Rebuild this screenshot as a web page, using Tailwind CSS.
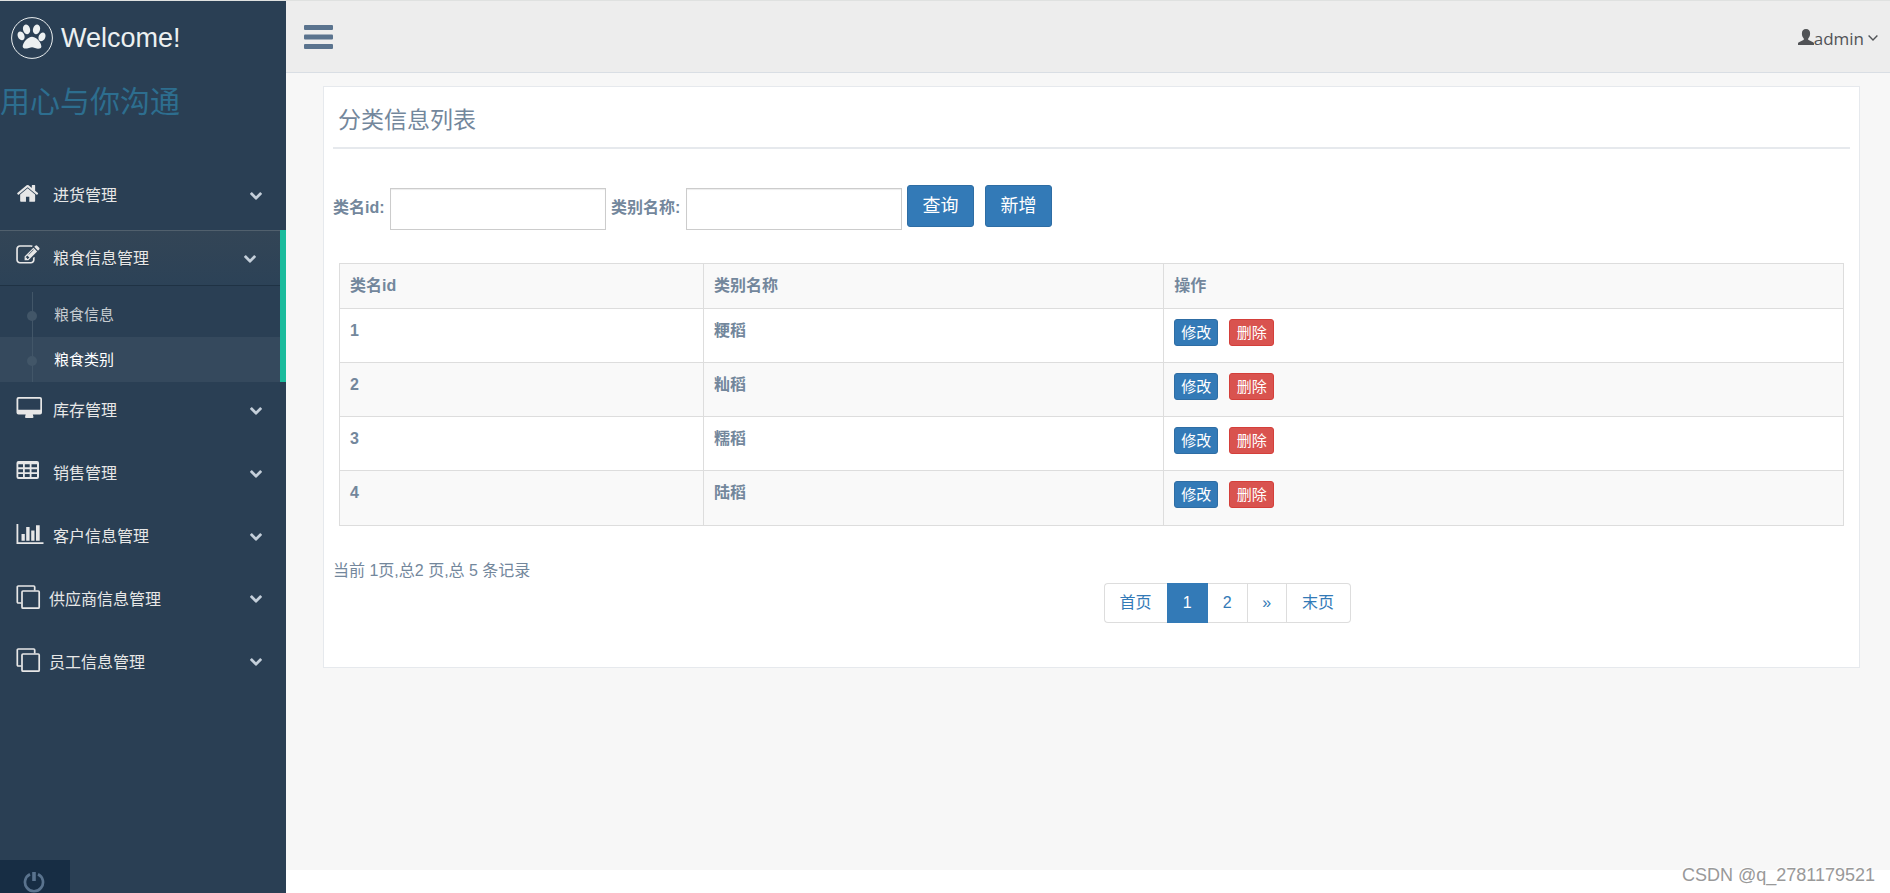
<!DOCTYPE html>
<html lang="zh-CN">
<head>
<meta charset="utf-8">
<meta name="viewport" content="width=device-width, initial-scale=1">
<title>分类信息列表</title>
<script src="https://cdn.jsdelivr.net/npm/@tailwindcss/browser@4"></script>
</head>
<body class="relative flex min-h-screen border-t border-[#dfe1e0] bg-white font-['Liberation_Sans','Noto_Sans_CJK_SC',sans-serif] text-base leading-6 text-[#73879c]">
<svg class="hidden" aria-hidden="true">
  <symbol id="chev" viewBox="90 520 1612 1060"><path d="M1683 808l-742 741q-19 19-45 19t-45-19l-742-741q-19-19-19-45.500t19-45.500l166-165q19-19 45-19t45 19l531 531 531-531q19-19 45-19t45 19l166 165q19 19 19 45.500t-19 45.500z"/></symbol>
  <symbol id="clone" viewBox="0 -1 28 28"><g fill="none" stroke="currentColor" stroke-width="1.700"><rect x="6" y="5" width="17.200" height="17.200" rx="1"/><path d="M5.500 17H2.300a1 1 0 0 1-1-1V1a1 1 0 0 1 1-1h15.400a1 1 0 0 1 1 1v3.500"/></g></symbol>
</svg>

<aside class="flex w-[286px] shrink-0 flex-col bg-[#2a3f54] text-[#e7e7e7]">
  <a href="#" class="flex h-[61px] items-center gap-2 pt-[13px] pl-[11px] text-[27px] text-[#ecf0f1]">
    <svg class="size-[42px]" viewBox="0 0 42 42" fill="currentColor" aria-hidden="true"><circle cx="21" cy="21" r="20.400" fill="none" stroke="currentColor" stroke-width="1"/><g transform="translate(7.500 5.200) scale(.0162)"><path transform="translate(-60 0)" d="M780 493.500q0 60-19 113.500t-63 92.500-105 39q-76 0-138-57.500t-92-135.500-30-151q0-60 19-113.500t63-92.500 105-39q77 0 138.500 57.500t91.500 135 30 151.500zm-342 421q0 80-42 139t-119 59q-76 0-141.500-55.500t-100.500-133.500-35-152q0-80 42-139.500t119-59.500q76 0 141.500 55.500t100.500 134 35 152.500zm458-19q118 0 255 97.500t229 237 92 254.500q0 46-17 76.500t-48.500 45-64.500 20-76 5.500q-68 0-187.500-45t-182.500-45q-66 0-192.500 44.500t-200.500 44.500q-183 0-183-146 0-86 56-191.500t139.500-192.500 187.500-146 193-59zm239-157q-61 0-105-39t-63-92.500-19-113.500q0-74 30-151.500t91.500-135 138.500-57.500q61 0 105 39t63 92.500 19 113.500q0 73-30 151t-92 135.500-138 57.500zm432-104q77 0 119 59.500t42 139.500q0 74-35 152t-100.500 133.500-141.500 55.500q-77 0-119-59t-42-139q0-74 35-152.500t100.500-134 141.500-55.500z"/></g></svg>
    <span>Welcome!</span>
  </a>
  <h2 class="mt-5 text-[30px] leading-10 text-[#2d6e8f]">用心与你沟通</h2>

  <nav class="mt-[45px]">
    <ul>
      <li class="mb-[7px]"><a href="#" class="flex h-14 items-center pt-[2px] pr-6 pl-4">
        <svg class="mr-[9px] size-7" viewBox="0 0 28 28" fill="currentColor" aria-hidden="true"><path transform="translate(0 -.3) scale(.013)" d="M1472 992v480q0 26-19 45t-45 19h-384v-384h-256v384h-384q-26 0-45-19t-19-45v-480q0-1 .5-3t.5-3l575-474 575 474q1 2 1 6zm223-69l-62 74q-8 9-21 11h-3q-13 0-21-7l-692-577-692 577q-12 8-24 7-13-2-21-11l-62-74q-8-10-7-23.500t11-21.500l719-599q32-26 76-26t76 26l244 204v-195q0-14 9-23t23-9h192q14 0 23 9t9 23v408l219 182q10 8 11 21.500t-7 23.500z"/></svg>
        <span class="grow">进货管理</span><svg class="h-2 w-3 text-[#c4cfda]" fill="currentColor"><use href="#chev"/></svg></a></li>

      <li class="border-r-[6px] border-[#1abb9c]">
        <a href="#" class="flex h-14 items-center border-t border-b border-t-[#51606d] border-b-[#1f3244] bg-linear-to-b from-[#334556] to-[#2c4257] pt-[2px] pr-6 pl-4">
          <svg class="mr-[9px] size-7" viewBox="0 0 28 28" fill="currentColor" aria-hidden="true"><path transform="translate(.2 -1.500) scale(.0131)" d="M888 1184l116-116-152-152-116 116v56h96v96h56zm440-720q-16-16-33 1l-350 350q-17 17-1 33t33-1l350-350q17-17 1-33zm80 594v190q0 119-84.500 203.500t-203.500 84.500h-832q-119 0-203.500-84.500t-84.500-203.500v-832q0-119 84.500-203.500t203.500-84.500h832q63 0 117 25 15 7 18 23 3 17-9 29l-49 49q-14 14-32 8-23-6-45-6h-832q-66 0-113 47t-47 113v832q0 66 47 113t113 47h832q66 0 113-47t47-113v-126q0-13 9-22l64-64q15-15 35-7t20 29zm-96-738l288 288-672 672h-288v-288zm444 132l-92 92-288-288 92-92q28-28 68-28t68 28l152 152q28 28 28 68t-28 68z"/></svg>
          <span class="grow text-shadow-xs">粮食信息管理</span><svg class="h-2 w-3 text-[#c4cfda]" fill="currentColor"><use href="#chev"/></svg></a>
        <ul class="pt-[6px] text-[15px]">
          <li><a href="#" class="relative flex h-[45px] items-center pl-[54px] text-[#c5cbd0] before:absolute before:inset-y-0 before:left-8 before:w-px before:bg-[#425668] after:absolute after:top-[19px] after:left-[27px] after:size-[10px] after:rounded-full after:bg-[#425668]">粮食信息</a></li>
          <li><a href="#" class="relative flex h-[45px] items-center bg-[#35495d] pl-[54px] text-white before:absolute before:inset-y-0 before:left-8 before:w-px before:bg-[#425668] after:absolute after:top-[19px] after:left-[27px] after:size-[10px] after:rounded-full after:bg-[#425668]">粮食类别</a></li>
        </ul>
      </li>

      <li class="mb-[7px]"><a href="#" class="flex h-14 items-center pt-[2px] pr-6 pl-4">
        <svg class="mr-[9px] size-7" viewBox="0 1 28 28" fill="currentColor" aria-hidden="true"><path fill-rule="evenodd" d="M2.500 1h21.500a2 2 0 0 1 2 2v13.500a2 2 0 0 1-2 2h-7.200l.6 2q.4 1.500-1 1.500h-6.300q-1.400 0-1-1.500l.6-2H2.500a2 2 0 0 1-2-2V3a2 2 0 0 1 2-2zm.3 1.700q-.5 0-.5.500v10.500h22v-10.500q0-.5-.5-.5z"/></svg>
        <span class="grow">库存管理</span><svg class="h-2 w-3 text-[#c4cfda]" fill="currentColor"><use href="#chev"/></svg></a></li>
      <li class="mb-[7px]"><a href="#" class="flex h-14 items-center pt-[2px] pr-6 pl-4">
        <svg class="mr-[9px] size-7" viewBox="0 1 28 28" fill="currentColor" aria-hidden="true"><path fill-rule="evenodd" d="M2.500 2h18.500a2 2 0 0 1 2 2v14a2 2 0 0 1-2 2H2.500a2 2 0 0 1-2-2V4a2 2 0 0 1 2-2zM2.300 5.300v3h4.700v-3zm6.500 0v3h4.900v-3zm6.700 0v3h5.500v-3zM2.300 10.200v3h4.700v-3zm6.500 0v3h4.900v-3zm6.700 0v3h5.500v-3zM2.300 15.100v3h4.700v-3zm6.500 0v3h4.900v-3zm6.700 0v3h5.500v-3z"/></svg>
        <span class="grow">销售管理</span><svg class="h-2 w-3 text-[#c4cfda]" fill="currentColor"><use href="#chev"/></svg></a></li>
      <li class="mb-[7px]"><a href="#" class="flex h-14 items-center pt-[2px] pr-6 pl-4">
        <svg class="mr-[9px] size-7" viewBox="0 1 28 28" fill="currentColor" aria-hidden="true"><path d="M.5 2h1.800v18.300h25.200v1.700H.5zM5.500 12h3.300v6.700H5.500zM10.200 5h3.400v13.700h-3.400zM15.200 8.500h3.300v10.200h-3.300zM20 3.200h3.700v15.500H20z"/></svg>
        <span class="grow">客户信息管理</span><svg class="h-2 w-3 text-[#c4cfda]" fill="currentColor"><use href="#chev"/></svg></a></li>
      <li class="mb-[7px]"><a href="#" class="flex h-14 items-center pr-6 pl-4">
        <svg class="mr-[5px] size-7"><use href="#clone"/></svg>
        <span class="grow pt-[2px]">供应商信息管理</span><svg class="h-2 w-3 text-[#c4cfda]" fill="currentColor"><use href="#chev"/></svg></a></li>
      <li class="mb-[7px]"><a href="#" class="flex h-14 items-center pr-6 pl-4">
        <svg class="mr-[5px] size-7"><use href="#clone"/></svg>
        <span class="grow pt-[2px]">员工信息管理</span><svg class="h-2 w-3 text-[#c4cfda]" fill="currentColor"><use href="#chev"/></svg></a></li>
    </ul>
  </nav>

  <button type="button" aria-label="退出" class="mt-auto flex h-[33px] w-[70px] items-end justify-center bg-[#172d44] pr-[2px] text-[#5a738e]">
    <svg class="h-[21px] w-[22px]" viewBox="0 0 22 21" fill="none" stroke="currentColor" aria-hidden="true"><path stroke-width="2.700" d="M7 2.200a9 9 0 1 0 8 0"/><path stroke-width="3.600" d="M11 0v9"/></svg>
  </button>
</aside>

<div class="flex min-w-0 grow flex-col">
  <header class="flex h-[72px] items-center justify-between border-b border-[#d9dee4] bg-[#ededed] pr-3 pl-[18px]">
    <button type="button" aria-label="菜单" class="text-[#5a738e]"><svg class="h-6 w-[29px]" viewBox="0 0 29 24" fill="currentColor"><rect width="29" height="5" rx="1"/><rect y="9.500" width="29" height="5" rx="1"/><rect y="19" width="29" height="5" rx="1"/></svg></button>
    <a href="#" class="flex items-center pt-[5px] font-['Open_Sans',sans-serif] text-[17px] text-[#515356]">
      <svg class="mb-1 h-4 w-4" viewBox="0 0 16 16" fill="currentColor" aria-hidden="true"><path d="M8 0c2.700 0 4.100 1.700 4.100 4.500 0 2-.6 3.700-1.700 4.800-.4.400-.4 1.500.2 1.800l4.500 2.100c.7.400.9.800.9 1.400V16H0v-1.400c0-.6.200-1 .9-1.400l4.500-2.100c.6-.3.600-1.400.2-1.800C4.500 8.200 3.900 6.500 3.900 4.500 3.900 1.700 5.300 0 8 0z"/></svg>
      <span>admin</span>
      <svg class="mb-[3px] ml-1 h-[6px] w-[10px]" viewBox="0 0 10 6" fill="none" stroke="currentColor" stroke-width="1.400" aria-hidden="true"><path d="M.6.600 5 5 9.400.600"/></svg>
    </a>
  </header>

  <main class="grow bg-[#f7f7f7] pt-[13px] pr-[30px] pl-[37px]">
    <section class="border border-[#e6e9ed] bg-white px-[9px] pb-11">
      <h1 class="flex h-[62px] items-center border-b-2 border-[#e6e9ed] pt-[5px] pl-[5px] text-[23px]">分类信息列表</h1>

      <form class="mt-9 flex items-start">
        <label for="cid" class="mt-[11px] w-[57px] font-bold">类名id:</label>
        <input id="cid" type="text" class="mt-[3px] h-[42px] w-[216px] border border-[#ccc] bg-white px-3 shadow-[inset_0_1px_1px_rgba(0,0,0,0.075)]">
        <label for="cname" class="mt-[11px] ml-[5px] w-[75px] font-bold">类别名称:</label>
        <input id="cname" type="text" class="mt-[3px] h-[42px] w-[216px] border border-[#ccc] bg-white px-3 shadow-[inset_0_1px_1px_rgba(0,0,0,0.075)]">
        <button type="submit" class="ml-[5px] h-[42px] w-[67px] rounded-[3px] border border-[#2e6da4] bg-[#337ab7] text-lg leading-none text-white">查询</button>
        <button type="button" class="ml-[11px] h-[42px] w-[67px] rounded-[3px] border border-[#2e6da4] bg-[#337ab7] text-lg leading-none text-white">新增</button>
      </form>

      <div class="mt-[33px] px-[6px]">
        <table class="w-full table-fixed border-collapse text-left font-bold [&_td]:border [&_td]:border-[#ddd] [&_td]:px-[10px] [&_td]:align-top [&_th]:border [&_th]:border-[#ddd] [&_th]:px-[10px]">
          <thead><tr class="h-[45px] bg-[#f9f9f9]"><th class="w-[24.200%]">类名id</th><th class="w-[30.600%]">类别名称</th><th>操作</th></tr></thead>
          <tbody>
            <tr class="h-[54px]"><td class="pt-[10px]">1</td><td class="pt-[10px]">粳稻</td><td class="pt-[10px]"><div class="flex gap-[11px] text-[15px] leading-none font-normal text-white"><button type="button" class="h-[27px] w-11 rounded-[3px] border border-[#2e6da4] bg-[#337ab7]">修改</button><button type="button" class="h-[27px] w-[45px] rounded-[3px] border border-[#d43f3a] bg-[#d9534f]">删除</button></div></td></tr>
            <tr class="h-[54px] bg-[#f9f9f9]"><td class="pt-[10px]">2</td><td class="pt-[10px]">籼稻</td><td class="pt-[10px]"><div class="flex gap-[11px] text-[15px] leading-none font-normal text-white"><button type="button" class="h-[27px] w-11 rounded-[3px] border border-[#2e6da4] bg-[#337ab7]">修改</button><button type="button" class="h-[27px] w-[45px] rounded-[3px] border border-[#d43f3a] bg-[#d9534f]">删除</button></div></td></tr>
            <tr class="h-[54px]"><td class="pt-[10px]">3</td><td class="pt-[10px]">糯稻</td><td class="pt-[10px]"><div class="flex gap-[11px] text-[15px] leading-none font-normal text-white"><button type="button" class="h-[27px] w-11 rounded-[3px] border border-[#2e6da4] bg-[#337ab7]">修改</button><button type="button" class="h-[27px] w-[45px] rounded-[3px] border border-[#d43f3a] bg-[#d9534f]">删除</button></div></td></tr>
            <tr class="h-[55px] bg-[#f9f9f9]"><td class="pt-[10px]">4</td><td class="pt-[10px]">陆稻</td><td class="pt-[10px]"><div class="flex gap-[11px] text-[15px] leading-none font-normal text-white"><button type="button" class="h-[27px] w-11 rounded-[3px] border border-[#2e6da4] bg-[#337ab7]">修改</button><button type="button" class="h-[27px] w-[45px] rounded-[3px] border border-[#d43f3a] bg-[#d9534f]">删除</button></div></td></tr>
          </tbody>
        </table>
      </div>

      <p class="mt-[33px]">当前 1页,总2 页,总 5 条记录</p>
      <nav aria-label="分页" class="ml-[50.800%] flex h-10 text-[#337ab7]">
        <a href="#" class="flex w-[63px] items-center justify-center rounded-l border border-r-0 border-[#ddd]">首页</a>
        <a href="#" aria-current="page" class="flex w-[41px] items-center justify-center bg-[#337ab7] text-white">1</a>
        <a href="#" class="flex w-10 items-center justify-center border border-l-0 border-[#ddd]">2</a>
        <a href="#" class="flex w-[39px] items-center justify-center border border-l-0 border-[#ddd]">»</a>
        <a href="#" class="flex w-16 items-center justify-center rounded-r border border-l-0 border-[#ddd]">末页</a>
      </nav>
    </section>
  </main>
  <footer class="h-[23px] bg-white"></footer>
</div>

<div class="absolute right-[15px] bottom-1 text-lg text-[#999] text-shadow-[-1px_-1px_0_#ffffffcc]">CSDN @q_2781179521</div>
</body>
</html>
